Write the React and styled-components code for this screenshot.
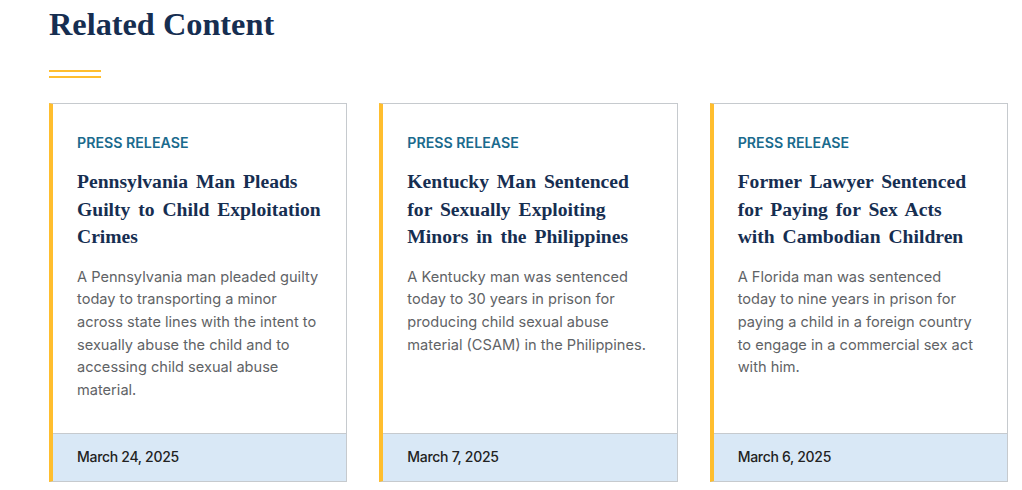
import React from 'react';
import styled, { createGlobalStyle } from 'styled-components';

const GlobalStyle = createGlobalStyle`
  body {
    margin: 0;
    background: #fff;
    font-family: 'Inter', 'Noto Sans', sans-serif;
  }
`;

const Section = styled.section`
  padding: 0 14px 0 49px;
`;

const Heading = styled.h2`
  margin: 0;
  padding-top: 4px;
  font-family: 'Liberation Serif', 'DejaVu Serif', serif;
  font-weight: 700;
  font-size: 32.3px;
  line-height: 40px;
  color: #162e51;
`;

const Rule = styled.div`
  width: 52px;
  height: 8px;
  margin: 26px 0 25px;
  border-top: 2px solid #ffbe2e;
  border-bottom: 2px solid #ffbe2e;
  box-sizing: border-box;
`;

const Grid = styled.div`
  display: grid;
  grid-template-columns: repeat(3, 1fr);
  column-gap: 32px;
`;

const Card = styled.article`
  display: flex;
  flex-direction: column;
  height: 379px;
  box-sizing: border-box;
  border: 1px solid #c6cace;
  border-left: 4px solid #ffbe2e;
  background: #fff;
`;

const Body = styled.div`
  flex: 1;
  padding: 29px 24px 0 24px;
`;

const Label = styled.div`
  font-size: 14.2px;
  font-weight: 600;
  color: #1a6a8d;
  line-height: 20px;
  text-transform: uppercase;
`;

const Title = styled.h3`
  margin: 15px 0 0;
  font-family: 'Liberation Serif', 'DejaVu Serif', serif;
  font-weight: 700;
  font-size: 19.6px;
  word-spacing: 3px;
  line-height: 27.5px;
  color: #162e51;
`;

const Summary = styled.p`
  margin: 15px 0 0;
  font-size: 14.6px;
  line-height: 22.7px;
  color: #5f6366;
`;

const Footer = styled.div`
  height: 48px;
  display: flex;
  align-items: center;
  padding: 0 24px 2px;
  box-sizing: border-box;
  background: #d9e8f6;
  border-top: 1px solid #c6cace;
  font-size: 14px;
  font-weight: 500;
  letter-spacing: -0.3px;
  color: #222;
`;

const items = [
  {
    title: 'Pennsylvania Man Pleads Guilty to Child Exploitation Crimes',
    summary:
      'A Pennsylvania man pleaded guilty today to transporting a minor across state lines with the intent to sexually abuse the child and to accessing child sexual abuse material.',
    date: 'March 24, 2025',
  },
  {
    title: 'Kentucky Man Sentenced for Sexually Exploiting Minors in the Philippines',
    summary:
      'A Kentucky man was sentenced today to 30 years in prison for producing child sexual abuse material (CSAM) in the Philippines.',
    date: 'March 7, 2025',
  },
  {
    title: 'Former Lawyer Sentenced for Paying for Sex Acts with Cambodian Children',
    summary:
      'A Florida man was sentenced today to nine years in prison for paying a child in a foreign country to engage in a commercial sex act with him.',
    date: 'March 6, 2025',
  },
];

const App = () => (
  <>
    <GlobalStyle />
    <Section>
      <Heading>Related Content</Heading>
      <Rule />
      <Grid>
        {items.map((item) => (
          <Card key={item.title}>
            <Body>
              <Label>Press Release</Label>
              <Title>{item.title}</Title>
              <Summary>{item.summary}</Summary>
            </Body>
            <Footer>{item.date}</Footer>
          </Card>
        ))}
      </Grid>
    </Section>
  </>
);

export default App;
